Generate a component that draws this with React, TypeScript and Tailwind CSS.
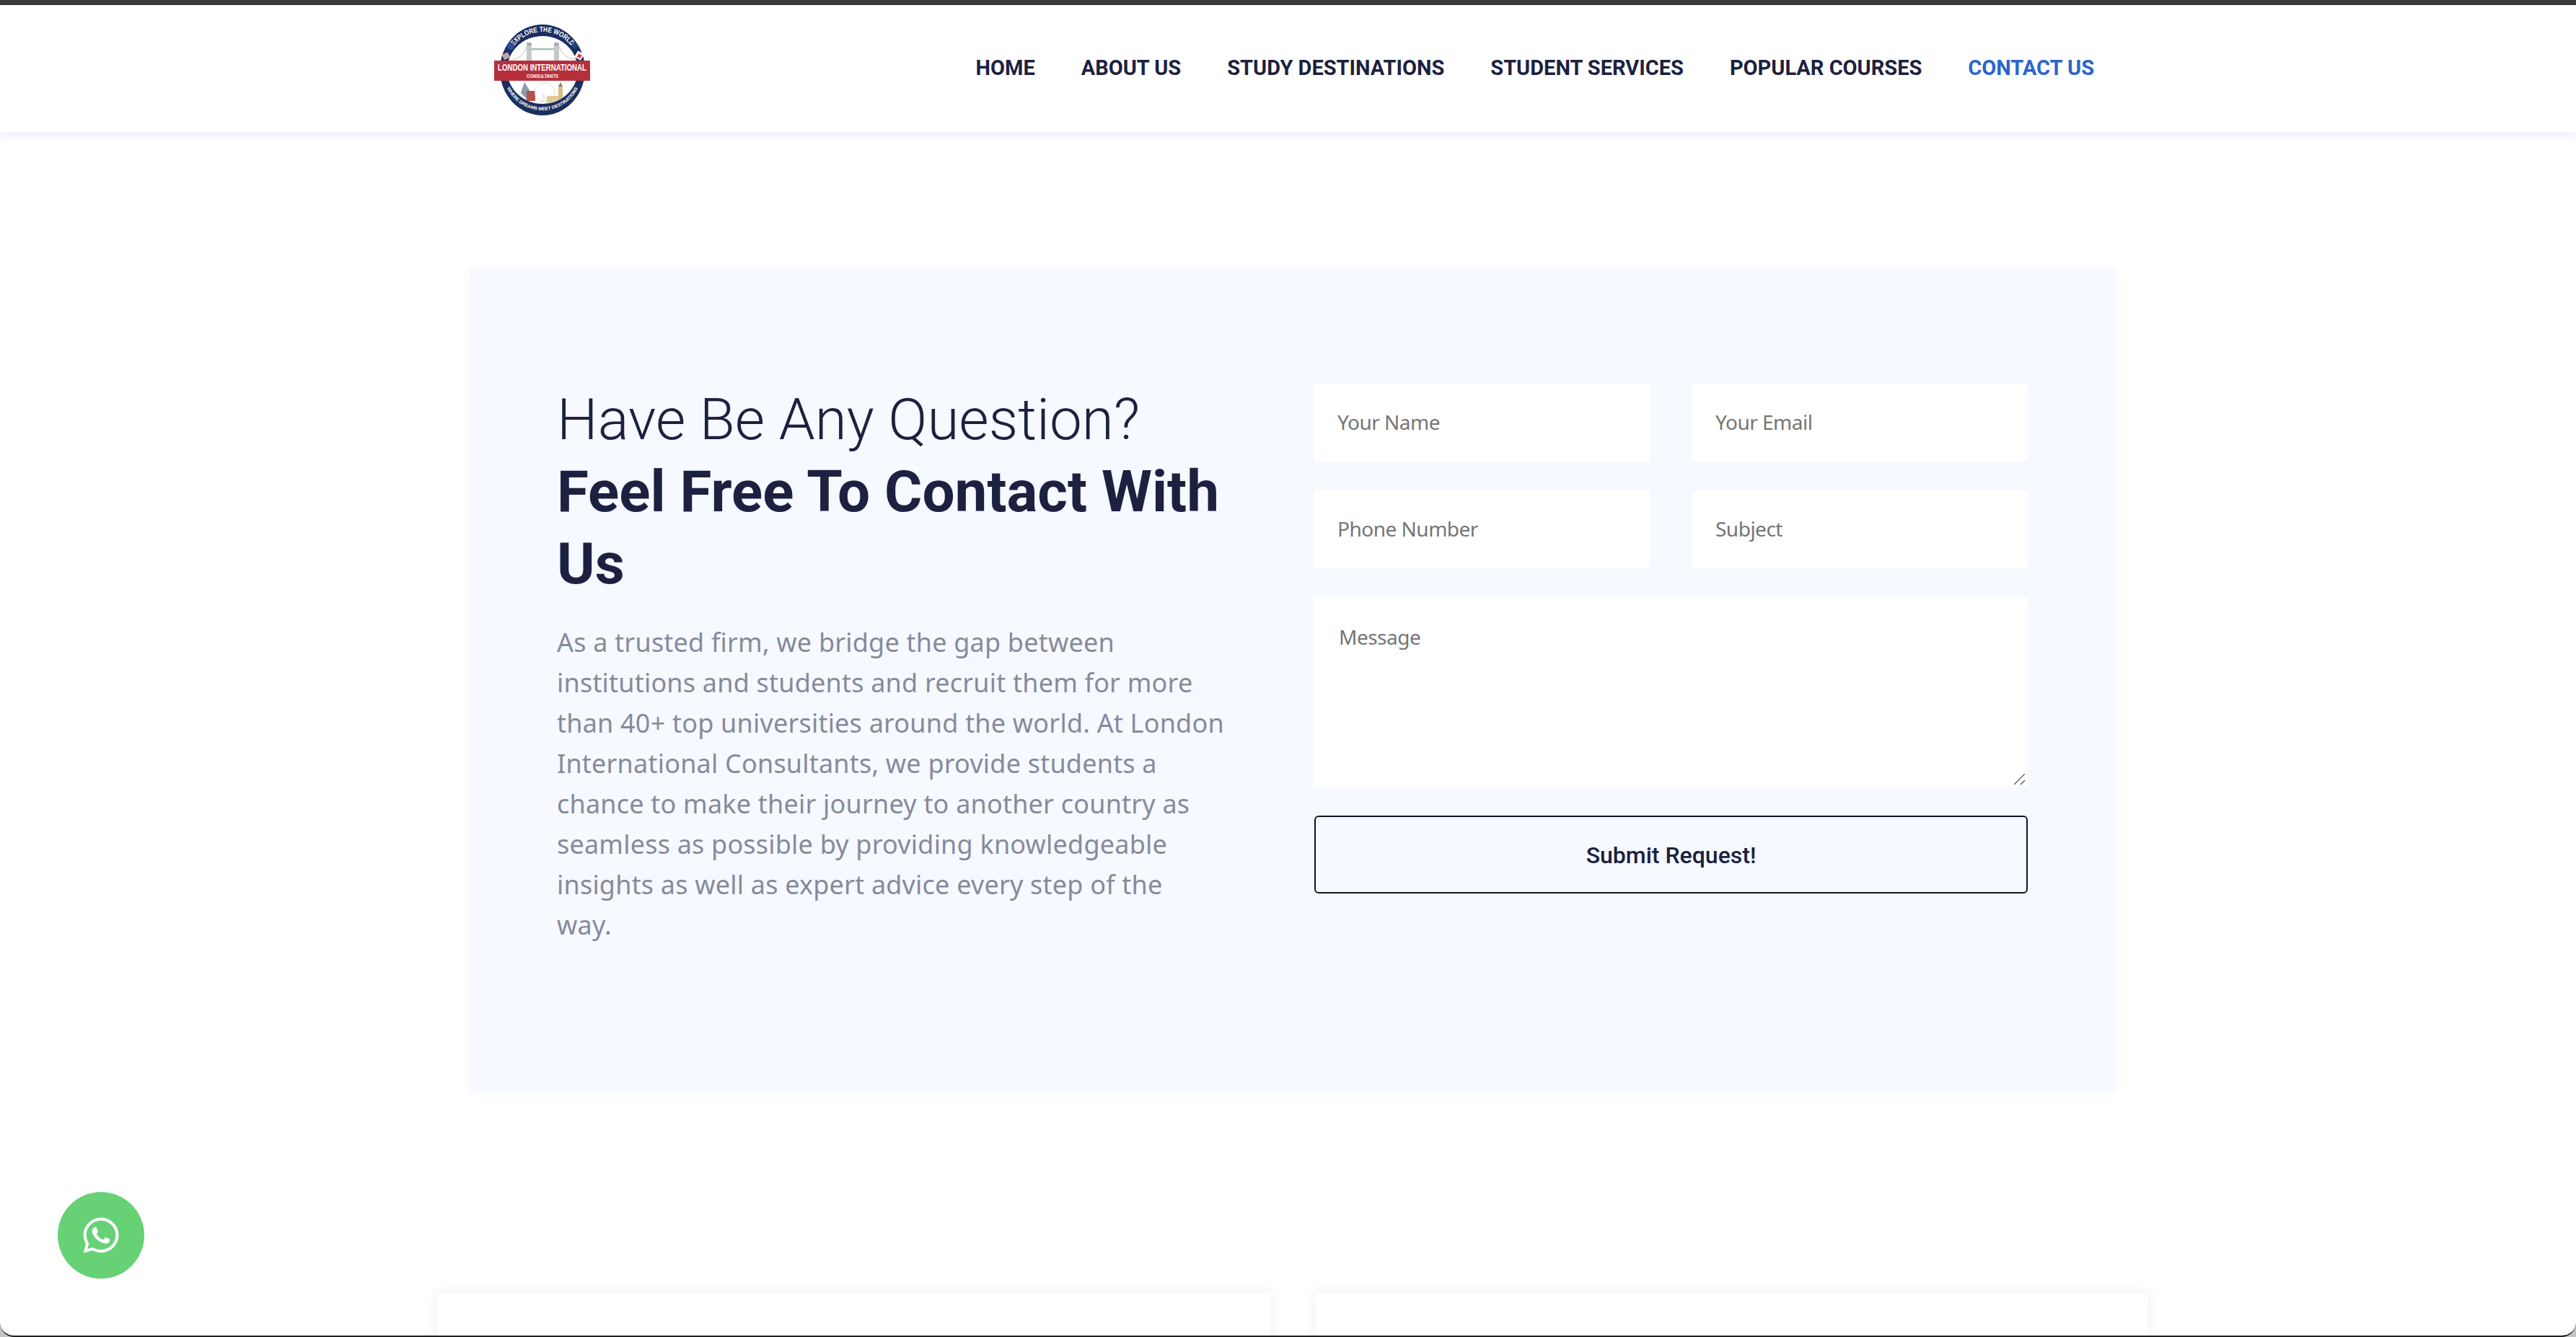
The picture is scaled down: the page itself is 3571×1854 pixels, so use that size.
import React from "react";
import { FaWhatsapp } from "react-icons/fa";

const nav = ["HOME", "ABOUT US", "STUDY DESTINATIONS", "STUDENT SERVICES", "POPULAR COURSES"];

function Logo() {
  return (
    <svg width="145" height="136" viewBox="0 0 145 136" className="block shrink-0">
      <defs>
        <path id="topArc" d="M 21 70 A 51 53 0 0 1 123 70" fill="none" />
        <path id="botArc" d="M 17 70 A 55 56 0 0 0 127 70" fill="none" />
        <clipPath id="inner">
          <ellipse cx="72" cy="70" rx="49" ry="47" />
        </clipPath>
      </defs>
      <ellipse cx="72" cy="70" rx="59" ry="63" fill="#1b2f5e" />
      <ellipse cx="72" cy="70" rx="49" ry="47" fill="#ffffff" />
      <text fontFamily="'Liberation Sans', sans-serif" fontSize="10" fontWeight="700" fill="#ffffff">
        <textPath href="#topArc" startOffset="50%" textAnchor="middle" textLength="92" lengthAdjust="spacingAndGlyphs">EXPLORE THE WORLD</textPath>
      </text>
      <text fontFamily="'Liberation Sans', sans-serif" fontSize="6.4" fontWeight="700" fill="#ffffff">
        <textPath href="#botArc" startOffset="50%" textAnchor="middle">WHERE DREAMS MEET DESTINATIONS</textPath>
      </text>
      <circle cx="28" cy="37" r="5" fill="#2c4f9e" />
      <rect x="17" y="47" width="9" height="8" fill="#c9a0b0" transform="rotate(-25 21 51)" />
      <rect x="113" y="33" width="8" height="7" fill="#27407f" transform="rotate(35 117 36)" />
      <rect x="118" y="45" width="10" height="10" fill="#ffffff" transform="rotate(30 123 50)" />
      <rect x="121" y="48" width="5" height="5" fill="#d9363e" transform="rotate(30 123 50)" />
      <g clipPath="url(#inner)">
        <path d="M30 56 Q44 54 50 38 M95 38 Q101 54 118 56" stroke="#a9b4b4" strokeWidth="0.8" fill="none" />
        <rect x="50" y="36" width="7" height="21" fill="#c4c8c8" />
        <rect x="88" y="36" width="7" height="21" fill="#c4c8c8" />
        <path d="M50 36 L51 31 L53.5 33 L56 31 L57 36Z M88 36 L89 31 L91.5 33 L94 31 L95 36Z" fill="#9aa5a5" />
        <rect x="57" y="40" width="31" height="2.4" fill="#9dc0b8" />
        <path d="M42 102 L47 87 L55 100 L52 112Z" fill="#8a9bb0" />
        <rect x="50" y="99" width="12" height="14" fill="#b5534f" />
        <ellipse cx="75" cy="101" rx="14" ry="13" fill="none" stroke="#d9d9d9" strokeWidth="0.8" />
        <path d="M71 116 L74 104 L77 116" fill="none" stroke="#c8ccd2" strokeWidth="0.8" />
        <rect x="78" y="106" width="16" height="9" fill="#e3c99a" />
        <rect x="94" y="93" width="6" height="18" fill="#d8bd85" />
        <path d="M94 93 L97 87 L100 93Z" fill="#7a8270" />
      </g>
      <rect x="5" y="57" width="133" height="28" fill="#b72f3b" />
      <text x="10" y="71" fontFamily="'Liberation Sans', sans-serif" fontSize="12" fontWeight="700" fill="#ffffff" textLength="123" lengthAdjust="spacingAndGlyphs">LONDON INTERNATIONAL</text>
      <text x="50" y="81" fontFamily="'Liberation Sans', sans-serif" fontSize="6.6" fontWeight="700" fill="#ffffff" textLength="44" lengthAdjust="spacingAndGlyphs">CONSULTANTS</text>
    </svg>
  );
}

const field =
  "h-[108px] w-full bg-white rounded-[3px] pl-[32px] pr-4 pb-[3px] text-[28px] text-[#333] placeholder:text-[#757575] outline-none font-['Noto_Sans',sans-serif] tracking-[-0.5px]";

export default function App() {
  return (
    <div className="relative h-[1854px] w-full overflow-hidden bg-[#c4c4c4]">
      <div className="flex h-full flex-col overflow-hidden rounded-b-[20px] border-b-2 border-[#1f1f1f] bg-white">
        <header className="relative z-10 flex h-[183px] shrink-0 items-center justify-between border-t-[7px] border-[#3b3b3b] bg-white pl-[680px] pr-[668px] shadow-[0_6px_10px_rgba(120,150,210,0.14)]">
          <Logo />
          <nav className="flex items-center gap-[64px] font-['Roboto',sans-serif] text-[29px] font-bold text-[#1c2140]">
            {nav.map((n) => (
              <a key={n}>{n}</a>
            ))}
            <a className="text-[#2b64cc]">CONTACT US</a>
          </nav>
        </header>

        <main className="flex shrink-0 flex-col">
          <section className="ml-[651px] mt-[190px] flex h-[1140px] w-[2281px] justify-between bg-[#f6f9ff] pl-[121px] pr-[121px] pt-[159px] shadow-[0_2px_14px_rgba(40,40,80,0.04)]">
            <div className="w-[960px]">
              <h2 className="font-['Roboto',sans-serif] text-[80px] leading-[100px] font-light text-[#1c2140]">
                Have Be Any Question?
                <br />
                <span className="font-bold">
                  Feel Free To Contact With
                  <br />
                  Us
                </span>
              </h2>
              <p className="mt-[31px] font-['Noto_Sans',sans-serif] text-[36px] leading-[56px] tracking-[0.2px] text-[#868a9b]">
                As a trusted firm, we bridge the gap between
                <br />
                institutions and students and recruit them for more
                <br />
                than 40+ top universities around the world. At London
                <br />
                International Consultants, we provide students a
                <br />
                chance to make their journey to another country as
                <br />
                seamless as possible by providing knowledgeable
                <br />
                insights as well as expert advice every step of the
                <br />
                way.
              </p>
            </div>
            <form className="flex w-[989px] flex-col">
              <div className="grid grid-cols-2 gap-x-[59px] gap-y-[40px]">
                <input className={field} placeholder="Your Name" />
                <input className={field} placeholder="Your Email" />
                <input className={field} placeholder="Phone Number" />
                <input className={field} placeholder="Subject" />
              </div>
              <div className="relative mt-[40px] h-[263px]">
                <textarea
                  className="block h-full w-full resize-none rounded-[3px] bg-white pl-[34px] pt-[34px] text-[28px] tracking-[-0.5px] outline-none placeholder:text-[#757575] font-['Noto_Sans',sans-serif]"
                  placeholder="Message"
                />
                <svg className="absolute bottom-[3px] right-[4px]" width="15" height="15" viewBox="0 0 15 15">
                  <path d="M0 15 L15 0 M9 15 L15 9" stroke="#444" strokeWidth="1.2" fill="none" />
                </svg>
              </div>
              <button
                type="button"
                className="mt-[40px] h-[108px] w-full rounded-[6px] border-2 border-[#12141f] pt-[2px] font-['Roboto',sans-serif] text-[32px] font-medium text-[#1c2140]"
              >
                Submit Request!
              </button>
            </form>
          </section>

          <section className="ml-[607px] mt-[280px] flex w-[2370px] gap-[61px]">
            <div className="h-[200px] flex-1 bg-white shadow-[0_0_20px_rgba(40,40,80,0.07)]" />
            <div className="h-[200px] flex-1 bg-white shadow-[0_0_20px_rgba(40,40,80,0.07)]" />
          </section>
        </main>
      </div>

      <a className="absolute left-[80px] top-[1653px] flex h-[120px] w-[120px] items-center justify-center rounded-full bg-[#67d175] text-white">
        <FaWhatsapp size={56} />
      </a>
    </div>
  );
}
